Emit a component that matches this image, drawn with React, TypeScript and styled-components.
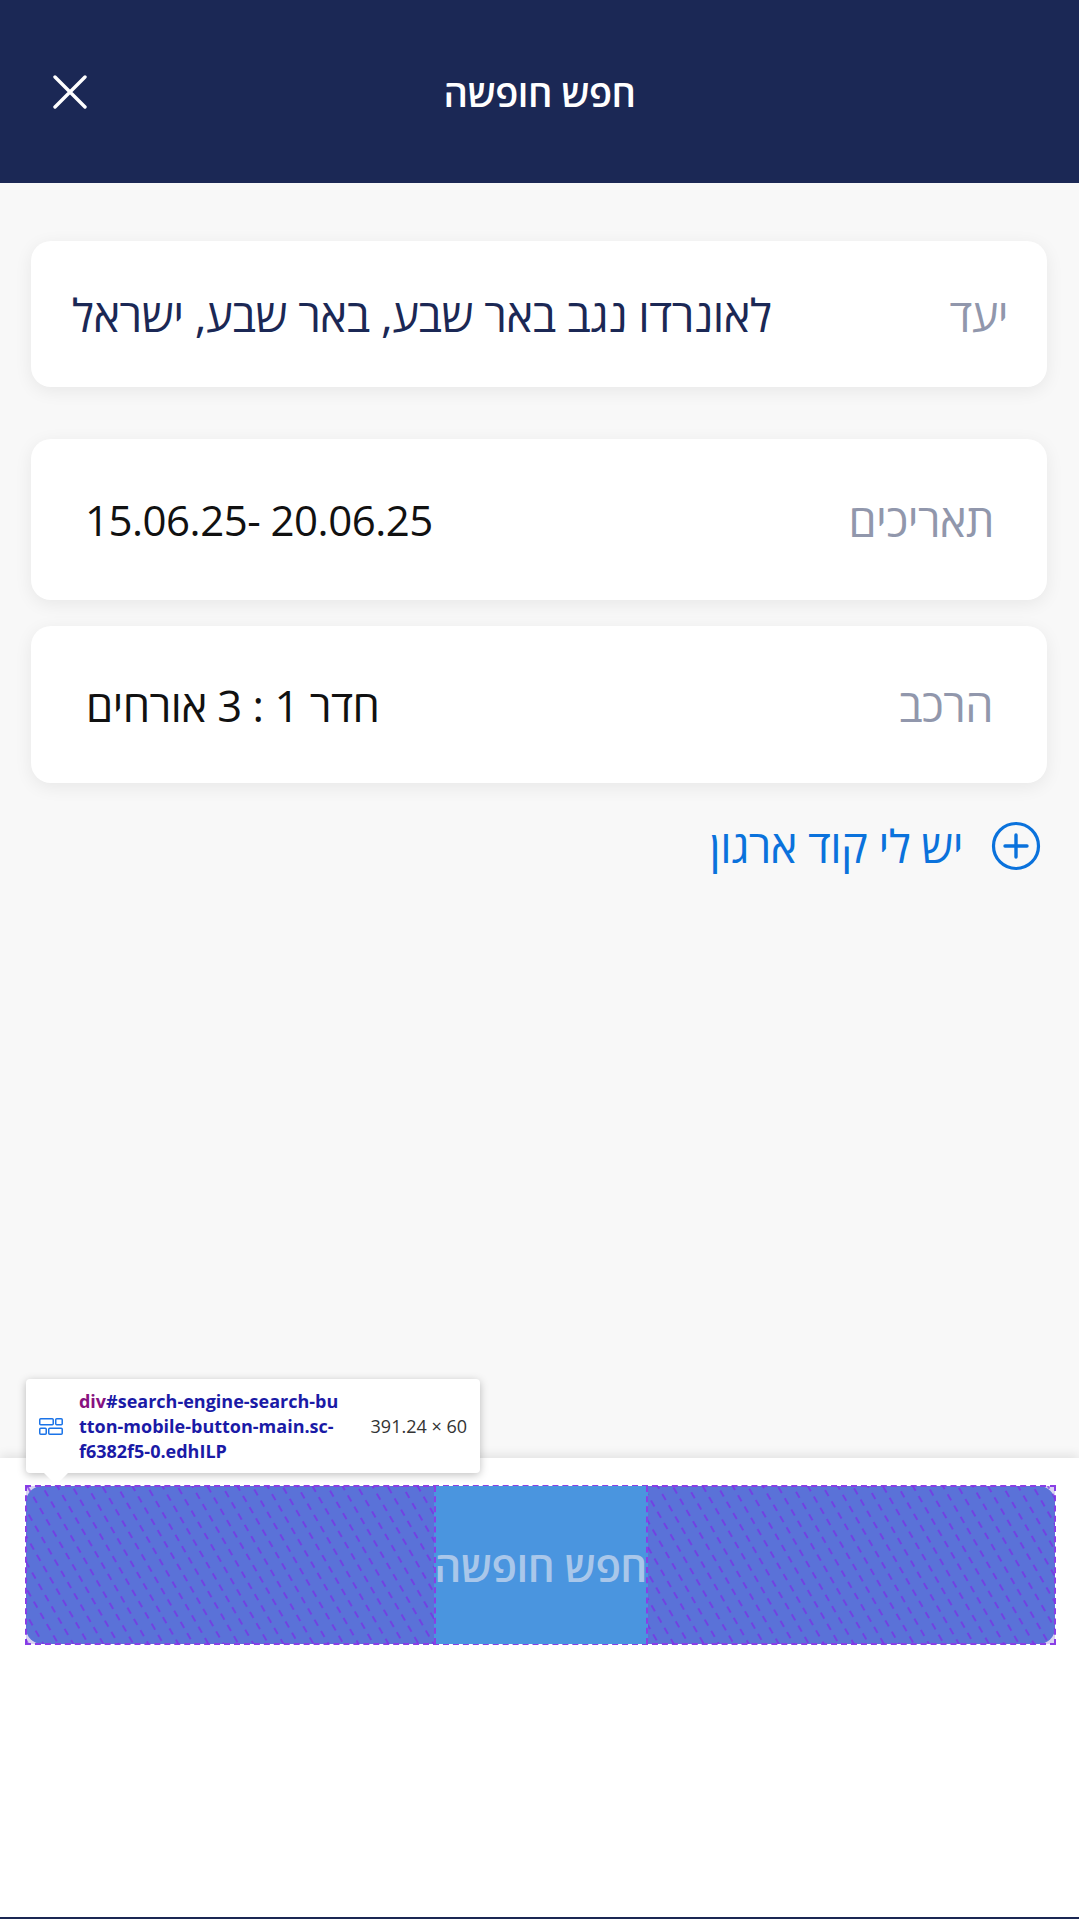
import React from 'react';
import styled, { createGlobalStyle } from 'styled-components';

const GlobalStyle = createGlobalStyle`
    html, body {
        margin: 0;
        padding: 0;
        background: #ffffff;
    }
    body {
        font-family: "Open Sans", "Liberation Sans", "DejaVu Sans", sans-serif;
    }
    * {
        box-sizing: border-box;
    }
`;

const Page = styled.div`
    direction: rtl;
    display: flex;
    flex-direction: column;
    min-height: 1919px;
    border-bottom: 2px solid #1b2855;
`;

const Header = styled.header`
    height: 183px;
    background-color: #1b2855;
    display: grid;
    grid-template-columns: 1fr auto 1fr;
    align-items: center;
    padding: 0 53px;
    color: #ffffff;
`;

const Title = styled.h1`
    grid-column: 2;
    margin: 0;
    font-size: 38px;
    font-weight: 600;
    letter-spacing: -0.5px;
`;

const CloseButton = styled.button`
    grid-column: 3;
    justify-self: end;
    background: none;
    border: none;
    padding: 0;
    width: 34px;
    height: 34px;
    cursor: pointer;
    display: flex;
`;

const Main = styled.main`
    background-color: #f8f8f8;
    padding: 58px 32px 0 31px;
    height: 1275px;
    display: flex;
    flex-direction: column;
`;

const Card = styled.div<{ $height: number; $gap: number; $padR: number; $padL: number }>`
    height: ${p => p.$height}px;
    margin-bottom: ${p => p.$gap}px;
    background: #ffffff;
    border-radius: 20px;
    box-shadow: 0 4px 18px rgba(0, 0, 0, 0.07);
    display: flex;
    align-items: center;
    justify-content: space-between;
    padding: 0 ${p => p.$padR}px 0 ${p => p.$padL}px;
`;

const Label = styled.span`
    font-size: 45px;
    color: #9197ac;
    letter-spacing: -0.5px;
`;

const Value = styled.span<{ $navy?: boolean; $numeric?: boolean; $size: number }>`
    font-size: ${p => p.$size}px;
    color: ${p => (p.$navy ? '#1b2855' : '#111111')};
    letter-spacing: -0.5px;
    direction: ${p => (p.$numeric ? 'ltr' : 'rtl')};
    white-space: nowrap;
`;

const OrgLink = styled.a`
    display: flex;
    align-items: center;
    gap: 28px;
    margin-top: 6px;
    padding-right: 6px;
    color: #0a72dc;
    font-size: 45px;
    font-weight: 500;
    text-decoration: none;
    letter-spacing: -0.5px;
`;

const Footer = styled.footer`
    position: relative;
    flex: 1;
    background: #ffffff;
    box-shadow: 0 -3px 10px rgba(0, 0, 0, 0.09);
    padding: 28px 24px 0 26px;
`;

const Highlight = styled.div`
    position: relative;
    height: 158px;
    outline: 2px dashed #8a3ee6;
    outline-offset: -1px;
    background-color: #d9d3f3;
`;

const SearchButton = styled.div`
    height: 100%;
    border-radius: 16px;
    background-color: #5a72d8;
    display: flex;
    justify-content: center;
`;

const Hatch = styled.svg`
    position: absolute;
    inset: 0;
    width: 100%;
    height: 100%;
    pointer-events: none;
`;

const ButtonLabel = styled.span`
    position: relative;
    z-index: 1;
    height: 100%;
    width: 214px;
    display: flex;
    align-items: center;
    justify-content: center;
    background-color: #4a95df;
    border-left: 2px dashed #8a3ee6;
    border-right: 2px dashed #8a3ee6;
    color: #a9c7ea;
    font-size: 42px;
    font-weight: 600;
    letter-spacing: -0.5px;
    white-space: nowrap;
`;

const Tooltip = styled.div`
    position: absolute;
    direction: ltr;
    left: 26px;
    top: -79px;
    width: 454px;
    height: 94px;
    background: #ffffff;
    border-radius: 4px;
    box-shadow: 0 2px 8px rgba(0, 0, 0, 0.25);
    display: flex;
    align-items: center;
    padding: 0 13px 0 13px;
    gap: 16px;
    font-family: "Open Sans", "Liberation Sans", sans-serif;
    z-index: 2;

    &::after {
        content: '';
        position: absolute;
        left: 18px;
        bottom: -12px;
        border-left: 12px solid transparent;
        border-right: 12px solid transparent;
        border-top: 12px solid #ffffff;
    }
`;

const TooltipName = styled.div`
    width: 276px;
    display: flex;
    flex-direction: column;
    font-size: 18px;
    font-weight: 700;
    line-height: 25px;
    color: #1a1aa6;
    white-space: nowrap;
`;

const TagName = styled.span`
    color: #881280;
`;

const TooltipSize = styled.div`
    font-size: 18px;
    color: #333333;
    white-space: nowrap;
`;

const App = () => {
    return (
        <>
            <GlobalStyle />
            <Page>
                <Header>
                    <Title>חפש חופשה</Title>
                    <CloseButton aria-label="close">
                        <svg width="34" height="34" viewBox="0 0 34 34">
                            <path d="M2 2 L32 32 M32 2 L2 32" stroke="#ffffff" strokeWidth="3.4" strokeLinecap="round" />
                        </svg>
                    </CloseButton>
                </Header>
                <Main>
                    <Card $height={146} $gap={52} $padR={39} $padL={41}>
                        <Label>יעד</Label>
                        <Value $navy $size={45.3}>לאונרדו נגב באר שבע, באר שבע, ישראל</Value>
                    </Card>
                    <Card $height={161} $gap={26} $padR={53} $padL={54}>
                        <Label>תאריכים</Label>
                        <Value $numeric $size={42}>15.06.25- 20.06.25</Value>
                    </Card>
                    <Card $height={157} $gap={26} $padR={54} $padL={55}>
                        <Label>הרכב</Label>
                        <Value $size={43.6}>חדר 1 : 3 אורחים</Value>
                    </Card>
                    <OrgLink href="#">
                        <svg width="50" height="50" viewBox="0 0 50 50">
                            <circle cx="25" cy="25" r="22.5" fill="none" stroke="#0a72dc" strokeWidth="3.2" />
                            <path d="M25 14 V36 M14 25 H36" stroke="#0a72dc" strokeWidth="3.4" strokeLinecap="round" />
                        </svg>
                        יש לי קוד ארגון
                    </OrgLink>
                </Main>
                <Footer>
                    <Tooltip>
                        <svg width="24" height="17" viewBox="0 0 24 17">
                            <rect x="0.75" y="0.75" width="13.5" height="6" rx="1" fill="none" stroke="#1a73e8" strokeWidth="1.5" />
                            <rect x="16.75" y="0.75" width="6.5" height="6" rx="1" fill="none" stroke="#1a73e8" strokeWidth="1.5" />
                            <rect x="0.75" y="10.25" width="6.5" height="6" rx="1" fill="none" stroke="#1a73e8" strokeWidth="1.5" />
                            <rect x="9.75" y="10.25" width="13.5" height="6" rx="1" fill="none" stroke="#1a73e8" strokeWidth="1.5" />
                        </svg>
                        <TooltipName>
                            <span><TagName>div</TagName>#search-engine-search-bu</span>
                            <span>tton-mobile-button-main.sc-</span>
                            <span>f6382f5-0.edhILP</span>
                        </TooltipName>
                        <TooltipSize>391.24 × 60</TooltipSize>
                    </Tooltip>
                    <Highlight>
                        <SearchButton id="search-engine-search-button-mobile-button-main">
                            <ButtonLabel>חפש חופשה</ButtonLabel>
                        </SearchButton>
                        <Hatch>
                            <defs>
                                <pattern id="hatch" width="13" height="13" patternUnits="userSpaceOnUse" patternTransform="rotate(-30)">
                                    <line x1="1" y1="0" x2="1" y2="13" stroke="#7a2fe6" strokeWidth="1.8" strokeDasharray="7 6" />
                                </pattern>
                                <clipPath id="pad">
                                    <rect x="0" y="0" width="408" height="158" />
                                    <rect x="622" y="0" width="420" height="158" />
                                </clipPath>
                            </defs>
                            <rect width="100%" height="100%" fill="url(#hatch)" opacity="0.8" clipPath="url(#pad)" />
                        </Hatch>
                    </Highlight>
                </Footer>
            </Page>
        </>
    );
};

export default App;
